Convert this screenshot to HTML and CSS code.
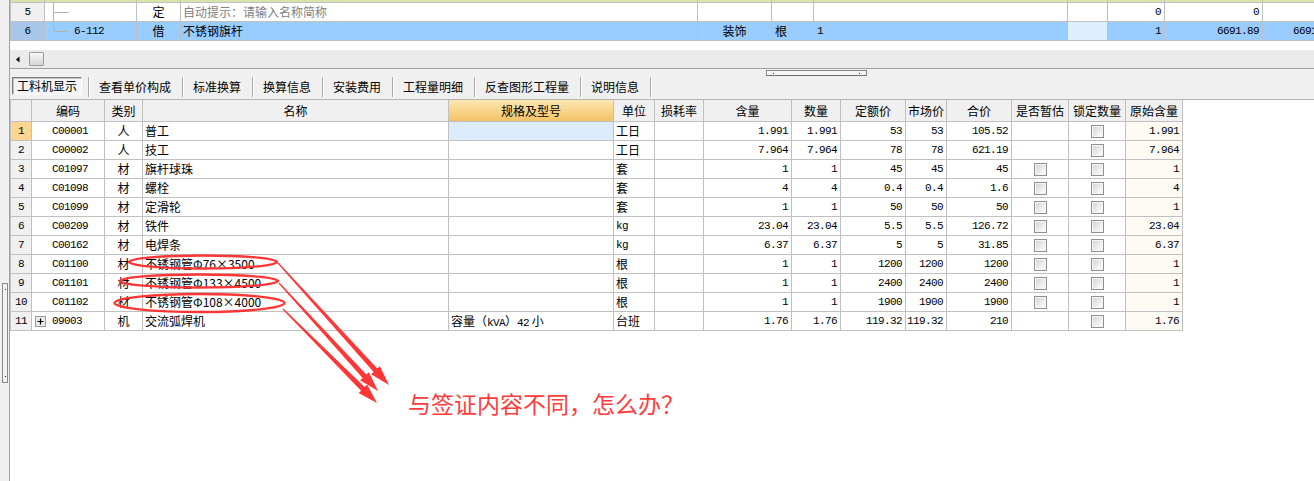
FILE: index.html
```html
<!DOCTYPE html>
<html lang="zh-CN">
<head>
<meta charset="utf-8">
<title>工料机显示</title>
<link rel="stylesheet" href="styles.css">
</head>
<body>
<div class="app">
  <aside class="leftbar"><div class="vhandle"><i></i><i></i></div></aside>
  <main class="main">
    <section class="topgrid">
      <div class="trow part">
        <div class="c"></div><div class="c"></div><div class="c"></div><div class="c"></div><div class="c"></div><div class="c"></div><div class="c"></div><div class="c"></div><div class="c"></div><div class="c"></div><div class="c"></div>
      </div>
      <div class="trow">
        <div class="c rn m">5</div>
        <div class="c tcode"><span class="branch full"></span></div>
        <div class="c ctr">定</div>
        <div class="c name hint">自动提示：请输入名称简称</div>
        <div class="c"></div>
        <div class="c"></div>
        <div class="c"></div>
        <div class="c"></div>
        <div class="c num">0</div>
        <div class="c num">0</div>
        <div class="c"></div>
      </div>
      <div class="trow sel">
        <div class="c rn m">6</div>
        <div class="c tcode"><span class="branch half"></span><span class="m">6-112</span></div>
        <div class="c ctr">借</div>
        <div class="c name">不锈钢旗杆</div>
        <div class="c ctr">装饰</div>
        <div class="c pl">根</div>
        <div class="c pl m">1</div>
        <div class="c lb"></div>
        <div class="c num">1</div>
        <div class="c num">6691.89</div>
        <div class="c num">6691.89</div>
      </div>
    </section>
    <div class="hscroll">
      <svg class="larr" width="4" height="7" viewBox="0 0 4 7"><path d="M0 3.5L3.5 0.5V6.5Z" fill="#000"/></svg>
      <span class="thumb"></span>
    </div>
    <nav class="tabbar">
      <div class="hhandle"><i></i><i></i></div>
      <div class="tabs">
        <span class="tab active">工料机显示</span>
        <span class="sep"></span><span class="tab">查看单价构成</span>
        <span class="sep"></span><span class="tab">标准换算</span>
        <span class="sep"></span><span class="tab">换算信息</span>
        <span class="sep"></span><span class="tab">安装费用</span>
        <span class="sep"></span><span class="tab">工程量明细</span>
        <span class="sep"></span><span class="tab">反查图形工程量</span>
        <span class="sep"></span><span class="tab">说明信息</span>
        <span class="sep"></span>
      </div>
    </nav>
    <section class="grid">
      <div class="grow head">
        <div class="c"></div><div class="c">编码</div><div class="c">类别</div><div class="c">名称</div><div class="c hl">规格及型号</div><div class="c">单位</div><div class="c">损耗率</div><div class="c">含量</div><div class="c">数量</div><div class="c">定额价</div><div class="c">市场价</div><div class="c">合价</div><div class="c">是否暂估</div><div class="c">锁定数量</div><div class="c">原始含量</div>
      </div>
      <div class="grow">
        <div class="c rn cur m">1</div><div class="c code m">C00001</div><div class="c ctr">人</div><div class="c">普工</div><div class="c focus"></div><div class="c">工日</div><div class="c"></div><div class="c num">1.991</div><div class="c num">1.991</div><div class="c num">53</div><div class="c num">53</div><div class="c num">105.52</div><div class="c ck"></div><div class="c ck"><span class="cb"></span></div><div class="c num orig">1.991</div>
      </div>
      <div class="grow">
        <div class="c rn m">2</div><div class="c code m">C00002</div><div class="c ctr">人</div><div class="c">技工</div><div class="c"></div><div class="c">工日</div><div class="c"></div><div class="c num">7.964</div><div class="c num">7.964</div><div class="c num">78</div><div class="c num">78</div><div class="c num">621.19</div><div class="c ck"></div><div class="c ck"><span class="cb"></span></div><div class="c num orig">7.964</div>
      </div>
      <div class="grow">
        <div class="c rn m">3</div><div class="c code m">C01097</div><div class="c ctr">材</div><div class="c">旗杆球珠</div><div class="c"></div><div class="c">套</div><div class="c"></div><div class="c num">1</div><div class="c num">1</div><div class="c num">45</div><div class="c num">45</div><div class="c num">45</div><div class="c ck"><span class="cb"></span></div><div class="c ck"><span class="cb"></span></div><div class="c num orig">1</div>
      </div>
      <div class="grow">
        <div class="c rn m">4</div><div class="c code m">C01098</div><div class="c ctr">材</div><div class="c">螺栓</div><div class="c"></div><div class="c">套</div><div class="c"></div><div class="c num">4</div><div class="c num">4</div><div class="c num">0.4</div><div class="c num">0.4</div><div class="c num">1.6</div><div class="c ck"><span class="cb"></span></div><div class="c ck"><span class="cb"></span></div><div class="c num orig">4</div>
      </div>
      <div class="grow">
        <div class="c rn m">5</div><div class="c code m">C01099</div><div class="c ctr">材</div><div class="c">定滑轮</div><div class="c"></div><div class="c">套</div><div class="c"></div><div class="c num">1</div><div class="c num">1</div><div class="c num">50</div><div class="c num">50</div><div class="c num">50</div><div class="c ck"><span class="cb"></span></div><div class="c ck"><span class="cb"></span></div><div class="c num orig">1</div>
      </div>
      <div class="grow">
        <div class="c rn m">6</div><div class="c code m">C00209</div><div class="c ctr">材</div><div class="c">铁件</div><div class="c"></div><div class="c m">kg</div><div class="c"></div><div class="c num">23.04</div><div class="c num">23.04</div><div class="c num">5.5</div><div class="c num">5.5</div><div class="c num">126.72</div><div class="c ck"><span class="cb"></span></div><div class="c ck"><span class="cb"></span></div><div class="c num orig">23.04</div>
      </div>
      <div class="grow">
        <div class="c rn m">7</div><div class="c code m">C00162</div><div class="c ctr">材</div><div class="c">电焊条</div><div class="c"></div><div class="c m">kg</div><div class="c"></div><div class="c num">6.37</div><div class="c num">6.37</div><div class="c num">5</div><div class="c num">5</div><div class="c num">31.85</div><div class="c ck"><span class="cb"></span></div><div class="c ck"><span class="cb"></span></div><div class="c num orig">6.37</div>
      </div>
      <div class="grow">
        <div class="c rn m">8</div><div class="c code m">C01100</div><div class="c ctr">材</div><div class="c">不锈钢管Φ76×3500</div><div class="c"></div><div class="c">根</div><div class="c"></div><div class="c num">1</div><div class="c num">1</div><div class="c num">1200</div><div class="c num">1200</div><div class="c num">1200</div><div class="c ck"><span class="cb"></span></div><div class="c ck"><span class="cb"></span></div><div class="c num orig">1</div>
      </div>
      <div class="grow">
        <div class="c rn m">9</div><div class="c code m">C01101</div><div class="c ctr">材</div><div class="c">不锈钢管Φ133×4500</div><div class="c"></div><div class="c">根</div><div class="c"></div><div class="c num">1</div><div class="c num">1</div><div class="c num">2400</div><div class="c num">2400</div><div class="c num">2400</div><div class="c ck"><span class="cb"></span></div><div class="c ck"><span class="cb"></span></div><div class="c num orig">1</div>
      </div>
      <div class="grow">
        <div class="c rn m">10</div><div class="c code m">C01102</div><div class="c ctr">材</div><div class="c">不锈钢管Φ108×4000</div><div class="c"></div><div class="c">根</div><div class="c"></div><div class="c num">1</div><div class="c num">1</div><div class="c num">1900</div><div class="c num">1900</div><div class="c num">1900</div><div class="c ck"><span class="cb"></span></div><div class="c ck"><span class="cb"></span></div><div class="c num orig">1</div>
      </div>
      <div class="grow">
        <div class="c rn m">11</div>
        <div class="c code tree m"><svg class="plus" width="11" height="11" viewBox="0 0 11 11"><rect x="0.5" y="0.5" width="10" height="10" fill="#ececec" stroke="#9a9a9a"/><path d="M2.5 5.5h6M5.5 2.5v6" stroke="#000" stroke-width="1.2"/></svg>09003</div>
        <div class="c ctr">机</div><div class="c">交流弧焊机</div>
        <div class="c">容量（<span class="mi">kVA</span>）<span class="mi">42</span> 小</div>
        <div class="c">台班</div><div class="c"></div><div class="c num">1.76</div><div class="c num">1.76</div><div class="c num">119.32</div><div class="c num">119.32</div><div class="c num">210</div><div class="c ck"></div><div class="c ck"><span class="cb"></span></div><div class="c num orig">1.76</div>
      </div>
    </section>
  </main>
</div>
<svg class="annot" width="1314" height="481" viewBox="0 0 1314 481">
  <g fill="none" stroke="#ff3636" stroke-width="2.4">
    <ellipse cx="203" cy="262" rx="74" ry="6.5"/>
    <ellipse cx="199" cy="281" rx="79" ry="6.5"/>
    <ellipse cx="199.5" cy="303" rx="85" ry="9"/>
  </g>
  <g fill="#ff3636">
    <polygon points="277.56,263.40 373.65,371.88 371.07,374.24 389,385 379.93,366.16 377.35,368.52 278.44,262.60"/>
    <polygon points="278.56,283.41 362.64,377.95 360.06,380.32 378,391 368.90,372.20 366.32,374.57 279.44,282.59"/>
    <polygon points="282.58,309.42 361.09,390.63 358.62,393.10 377,403 367.10,384.62 364.63,387.09 283.42,308.58"/>
  </g>
</svg>
<div class="note">与签证内容不同，怎么办？</div>
</body>
</html>
```

FILE: styles.css
```css
* { box-sizing: border-box; }
html, body { margin: 0; padding: 0; }
body {
  width: 1314px;
  height: 481px;
  overflow: hidden;
  position: relative;
  background: #fff;
  font-family: "Noto Sans CJK SC", "Liberation Sans", sans-serif;
  font-size: 12px;
  color: #000;
}
.app { display: flex; height: 481px; }

.leftbar {
  width: 10px;
  flex: none;
  background: #f0f0f0;
  border-right: 1px solid #a0a0a0;
  padding-top: 283px;
}
.vhandle {
  margin-left: 2px;
  width: 6px;
  height: 100px;
  border: 1px solid #8a8a8a;
  background: #f2f2f2;
  display: flex;
  flex-direction: column;
  justify-content: space-between;
  align-items: center;
  padding: 5px 0;
}
.vhandle i, .hhandle i { display: block; width: 1px; height: 1px; background: #1a2a8e; }

.main { flex: 1; min-width: 0; display: flex; flex-direction: column; overflow: hidden; }

/* top grid */
.topgrid { height: 50px; flex: none; background: #fff; overflow: hidden; }
.trow {
  display: grid;
  grid-template-columns: 34px 92px 44px 517px 74px 42px 254px 40px 57px 98px 76px;
  border-left: 1px solid #c0c0c0;
  width: max-content;
}
.trow > .c {
  height: 19px;
  border-right: 1px solid #c0c0c0;
  border-bottom: 1px solid #c0c0c0;
  line-height: 18px;
  white-space: nowrap;
  overflow: hidden;
}
.trow.part > .c { height: 3px; background: #d6e6a8; }
.trow .rn { background: #f0f0f0; text-align: center; }
.trow.sel > .c { background: #99ccff; }
.trow.sel > .rn { background: #a7c6e9; }
.trow.sel > .lb { background: #ddeeff; }
.trow .name { padding-left: 2px; }
.trow .hint { color: #808080; }
.trow .pl { padding-left: 3px; }
.tcode { display: flex; align-items: stretch; padding-left: 8px; }
.branch { position: relative; width: 16px; margin-right: 5px; flex: none; }
.branch::before {
  content: "";
  position: absolute;
  left: 0; top: 0;
  width: 1px;
  background: #b4b4b4;
}
.branch.full::before { height: 100%; }
.branch.half::before { height: 10px; }
.branch::after {
  content: "";
  position: absolute;
  left: 0; top: 9px;
  width: 16px; height: 1px;
  background: #b4b4b4;
}

/* horizontal scrollbar */
.hscroll {
  height: 19px;
  flex: none;
  background: #ebebeb;
  border-bottom: 1px solid #a0a0a0;
  display: flex;
  align-items: center;
  padding-left: 6px;
}
.larr { display: block; }
.thumb {
  display: block;
  margin-left: 9px;
  width: 15px;
  height: 14px;
  border: 1px solid #9c9c9c;
  border-radius: 1px;
  background: linear-gradient(#f8f8f8, #d6d6d6);
}

/* tabs */
.tabbar { height: 30px; flex: none; background: #f0f0f0; padding-top: 1px; }
.hhandle {
  margin-left: 756px;
  width: 101px;
  height: 6px;
  border: 1px solid #8a8a8a;
  border-bottom-color: #6f6f6f;
  background: #f6f6f6;
  display: flex;
  justify-content: space-between;
  align-items: center;
  padding: 0 6px;
}
.tabs { display: flex; height: 20px; margin-top: 1px; padding-left: 2px; }
.tab { padding: 0 11px 0 9px; line-height: 19px; white-space: nowrap; }
.tab.active {
  width: 70px;
  height: 18px;
  padding: 0;
  text-align: center;
  line-height: 16px;
  border: 1px solid;
  border-color: #7a7a7a #ffffff #ffffff #7a7a7a;
  box-shadow: inset 1px 1px 0 #c4c4c4;
  background: #f4f4f4;
  margin-right: 6px;
}
.sep { width: 2px; height: 20px; border-left: 1px solid #a8a8a8; border-right: 1px solid #ffffff; flex: none; }

/* main grid */
.grid { flex: 1; border-top: 1px solid #b4b4b4; background: #fff; }
.grow {
  display: grid;
  grid-template-columns: 21px 73px 38px 306px 165px 41px 49px 88px 49px 65px 41px 65px 57px 57px 57px;
  border-left: 1px solid #c0c0c0;
  width: max-content;
}
.grow > .c {
  height: 19px;
  border-right: 1px solid #c0c0c0;
  border-bottom: 1px solid #c0c0c0;
  line-height: 18px;
  padding: 0 2px;
  white-space: nowrap;
  overflow: hidden;
}
.grow.head > .c {
  height: 22px;
  line-height: 21px;
  background: #f0f0f0;
  text-align: center;
  padding: 0;
}
.grow.head > .hl { background: linear-gradient(#fde7b1, #f3c266); }
.grow .rn { background: #f0f0f0; text-align: center; padding: 0; }
.grow .rn.cur { background: #fdd593; }
.grow .focus { background: #ddecfc; }
.grow .orig { background: #fdf9f3; }
.grow > .code { padding-left: 20px; }
.grow > .code.tree { padding-left: 3px; display: flex; align-items: center; }
.plus { display: block; margin-right: 6px; flex: none; }

.ctr { text-align: center; }
.m, .num, .mi {
  font-family: "Liberation Mono", "Noto Sans CJK SC", monospace;
  font-size: 11px;
  letter-spacing: -0.6px;
}
.grow > .num, .trow > .num { text-align: right; padding: 0 3px 0 0; }
.ck { display: flex; align-items: center; justify-content: center; }
.cb {
  display: block;
  width: 13px;
  height: 13px;
  border: 1px solid #8f8f8f;
  background: linear-gradient(135deg, #d2d2d2 0%, #ececec 55%, #ffffff 100%);
  box-shadow: inset 0 0 0 1px #f6f6f6;
}

/* annotation overlay */
.annot { position: absolute; left: 0; top: 0; pointer-events: none; }
.note {
  position: absolute;
  left: 408px;
  top: 390px;
  font-size: 23px;
  line-height: 26px;
  color: #ff3c3c;
  white-space: nowrap;
}
```
